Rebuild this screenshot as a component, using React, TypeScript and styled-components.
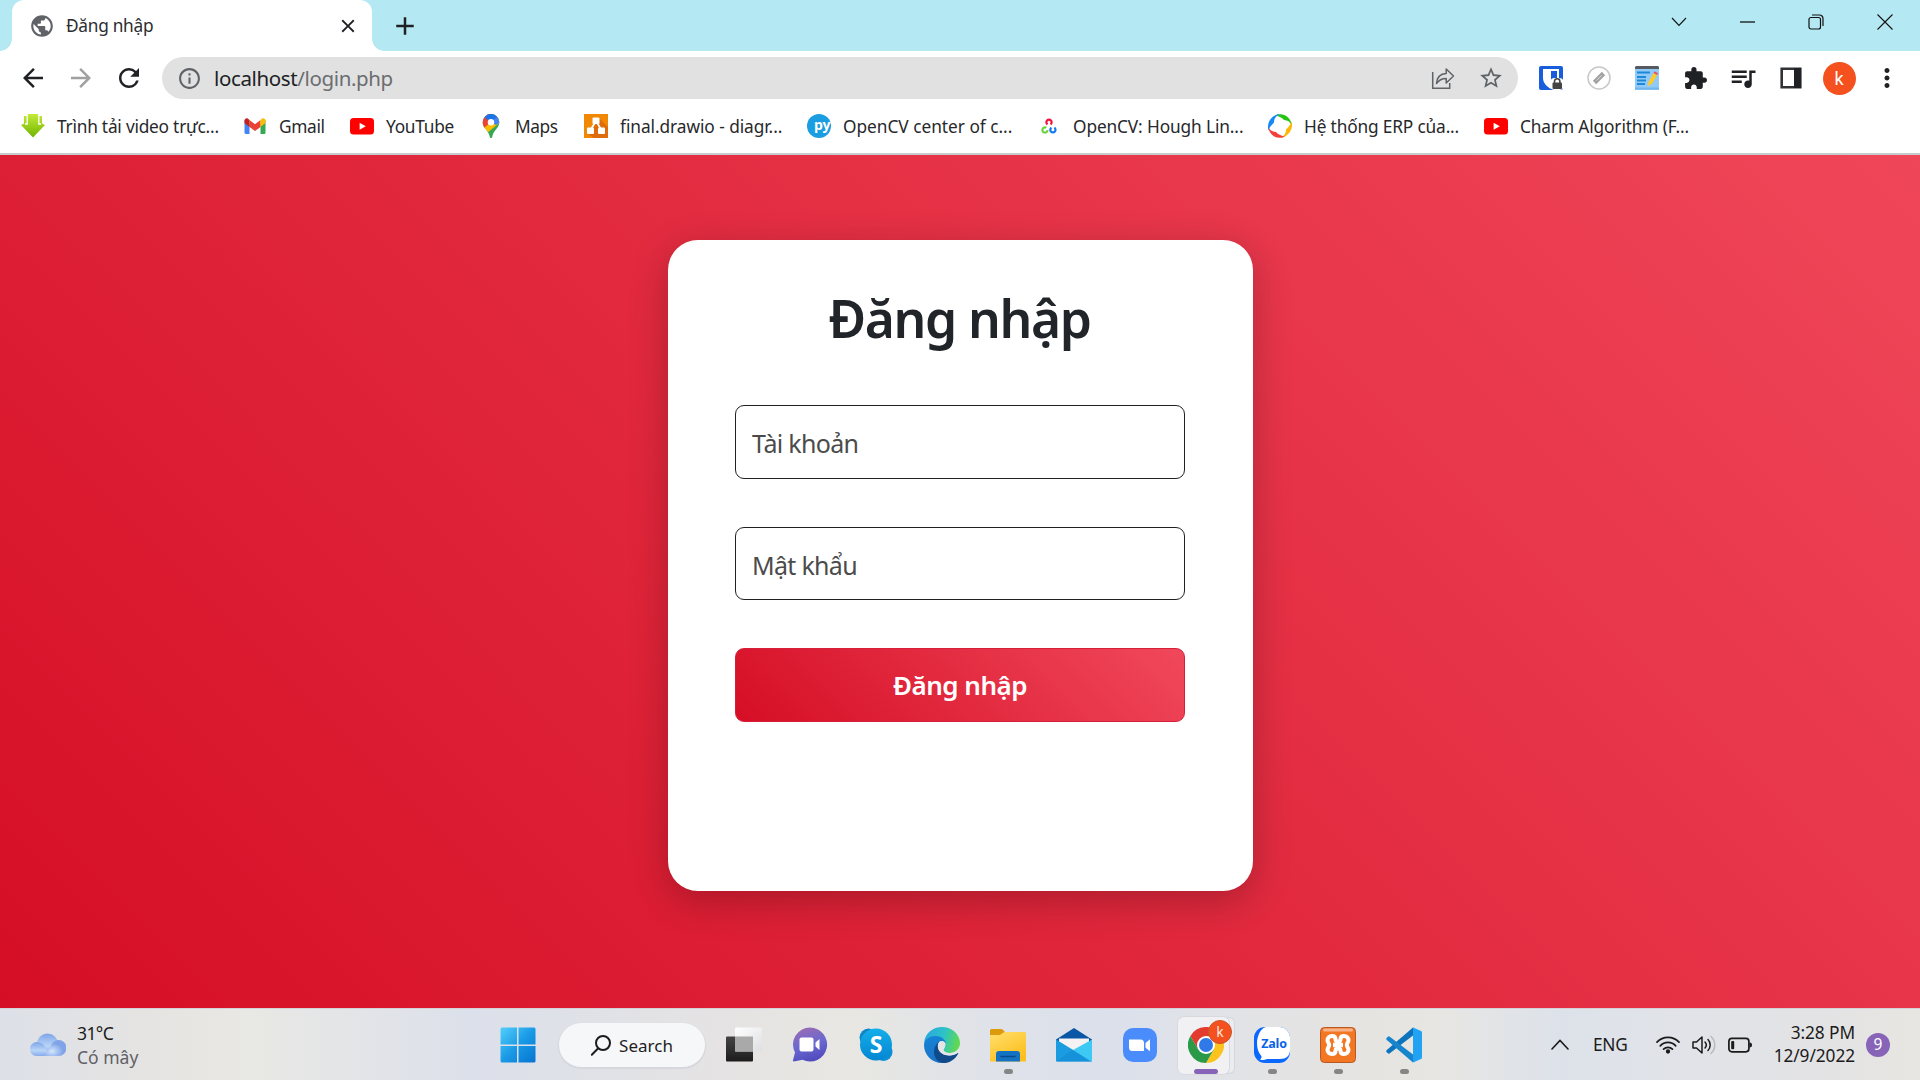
import React from "react";
import styled, { createGlobalStyle } from "styled-components";
import {
  MdAdd,
  MdArrowBack,
  MdArrowForward,
  MdClose,
  MdExtension,
  MdInfoOutline,
  MdMoreVert,
  MdPublic,
  MdQueueMusic,
  MdRefresh,
  MdStarBorder,
} from "react-icons/md";

const GlobalStyle = createGlobalStyle`
  * { box-sizing: border-box; }
  body {
    margin: 0;
    background: #fff;
    font-family: "Noto Sans", "Open Sans", sans-serif;
    overflow: hidden;
  }
  svg { display: block; flex: none; }
`;

const Screen = styled.div`
  width: 1920px;
  height: 1080px;
  display: flex;
  flex-direction: column;
  overflow: hidden;
`;

/* Browser chrome */

const TabStrip = styled.header`
  height: 51px;
  flex: none;
  display: flex;
  background: #b4e8f2;
`;

const TabCorner = styled.div<{ $side: "left" | "right" }>`
  width: 12px;
  height: 51px;
  background: radial-gradient(
      circle 12px at ${(p) => (p.$side === "left" ? "0" : "100%")} 0,
      #b4e8f2 11.5px,
      #fff 12px
    )
    0 39px / 12px 12px no-repeat;
`;

const Tab = styled.div`
  width: 360px;
  height: 51px;
  padding: 0 13px 0 17px;
  border-radius: 12px 12px 0 0;
  background: #fff;
  display: flex;
  align-items: center;
  color: #5f6368;
`;

const TabTitle = styled.span`
  flex: 1;
  margin-left: 11px;
  font-size: 17.3px;
  letter-spacing: -0.28px;
  line-height: 50px;
  color: #2b2d31;
`;

const NewTab = styled.button`
  margin: 11px 0 0 6px;
  padding: 0;
  width: 30px;
  height: 30px;
  border: 0;
  background: none;
  color: #202124;
`;

const WindowControls = styled.div`
  margin: 0 1px 0 auto;
  height: 43px;
  display: flex;
`;

const WindowButton = styled.button`
  width: 68.7px;
  padding: 0;
  border: 0;
  background: none;
  display: grid;
  place-items: center;
`;

const Toolbar = styled.div`
  height: 54px;
  flex: none;
  display: flex;
  align-items: center;
  padding: 0 9px 0 9px;
  color: #202124;
`;

const ToolButton = styled.button<{ $color?: string }>`
  width: 48px;
  height: 42px;
  padding: 0;
  border: 0;
  background: none;
  display: grid;
  place-items: center;
  color: ${(p) => p.$color ?? "#202124"};
`;

const AddressBar = styled.div`
  width: 1356px;
  height: 42px;
  margin: 0 9px;
  padding: 0 3px 0 15px;
  border-radius: 21px;
  background: #e1e1e1;
  display: flex;
  align-items: center;
  color: #5f6368;
`;

const Url = styled.span`
  flex: 1;
  margin-left: 12px;
  font-size: 20.5px;
  letter-spacing: -0.37px;
  line-height: 42px;
  color: #6b6d70;

  b {
    font-weight: 400;
    color: #202124;
  }
`;

const Avatar = styled.span`
  width: 33px;
  height: 33px;
  border-radius: 50%;
  background: #f4511e;
  color: #fff;
  font: 18px/33px Roboto, sans-serif;
  text-align: center;
`;

const BookmarksBar = styled.nav`
  height: 48px;
  flex: none;
  display: flex;
  align-items: center;
  padding: 0 0 6px 21px;
`;

const Bookmark = styled.a<{ $width: number; $spacing: number }>`
  width: ${(p) => p.$width}px;
  flex: none;
  display: flex;
  align-items: center;
  gap: 12px;
  white-space: nowrap;
  color: #27282b;
  font-size: 17.3px;
  letter-spacing: ${(p) => p.$spacing}px;
`;

const ChromeEdge = styled.div`
  height: 2px;
  flex: none;
  background: #c8cbcb;
`;

/* Login page */

const Page = styled.main`
  height: 853px;
  flex: none;
  display: flex;
  justify-content: center;
  align-items: flex-start;
  padding: 85px 0 0 1px;
  background: linear-gradient(45deg, #d50e25, #f04659);
`;

const Card = styled.form`
  width: 585px;
  height: 651px;
  padding: 44px 67px 0;
  border-radius: 30px;
  background: #fff;
  box-shadow: 0 10px 38px rgba(0, 0, 0, 0.24);
  display: flex;
  flex-direction: column;
`;

const Title = styled.h1`
  margin: 0 2px 53px 0;
  height: 68px;
  font-size: 51.5px;
  line-height: 68px;
  font-weight: 600;
  letter-spacing: -1.35px;
  text-align: center;
  white-space: nowrap;
  color: #212529;
`;

const Field = styled.input<{ $height: number }>`
  width: 450px;
  height: ${(p) => p.$height}px;
  margin: 0 0 48px;
  padding: 2px 16px 0;
  border: 1.4px solid #212121;
  border-radius: 9px;
  outline: 0;
  background: #fff;
  font: 25px "Noto Sans", sans-serif;
  letter-spacing: -0.7px;

  &::placeholder {
    color: #4b4b4b;
    opacity: 1;
  }
`;

const Submit = styled.button`
  width: 450px;
  height: 74px;
  padding: 0;
  border: 1px solid #d81f39;
  border-radius: 9px;
  background: linear-gradient(45deg, #d50e25, #f1485b);
  color: #fff;
  font: 600 26px "Noto Sans", sans-serif;
  letter-spacing: -0.5px;
`;

/* Taskbar */

const Taskbar = styled.footer`
  height: 72px;
  flex: none;
  display: flex;
  border-top: 1px solid #d3d0d6;
  background: linear-gradient(
    90deg,
    #dde0e8 0,
    #e6e4e2 150px,
    #e8e8e4 250px,
    #e2e4e8 370px,
    #dce0ea 470px,
    #dfe1e8 570px,
    #e5e3e3 720px,
    #e8e7e2 850px,
    #e1e3e8 950px,
    #dbe0eb 1110px,
    #e2e3e7 1230px,
    #e6e4e1 1370px,
    #e7e6e3 1440px,
    #dde2ea 1560px,
    #e1e3e8 1680px,
    #e3e3e5 1820px,
    #e7e6e1 1920px
  );
`;

const Weather = styled.div`
  width: 485px;
  padding: 0 0 0 30px;
  display: flex;
  align-items: center;
  gap: 11px;
`;

const WeatherText = styled.div`
  display: flex;
  flex-direction: column;
  font-size: 17.5px;
  line-height: 24px;
  letter-spacing: -0.6px;
  color: #1b1b1b;
  padding-top: 1px;

  small {
    font-size: inherit;
    letter-spacing: 0;
    color: #606166;
  }
`;

const AppSlot = styled.div<{ $active?: boolean }>`
  position: relative;
  width: 66px;
  display: grid;
  place-items: center;
  padding-top: 1px;
`;

const ActivePlate = styled.div`
  position: absolute;
  left: 5px;
  top: 8px;
  width: 51px;
  height: 57px;
  border-radius: 6px;
  background: #f1f1f4;
  box-shadow: 0 0 0 1px #d9dae0, 6px 0 0 -1px #ebecef, 6px 0 0 0 #d5d7dd;
`;

const AppArt = styled.div`
  position: relative;
`;

const RunMark = styled.i<{ $active?: boolean }>`
  position: absolute;
  left: ${(p) => (p.$active ? 21 : 28.5)}px;
  bottom: 6px;
  width: ${(p) => (p.$active ? 24 : 9)}px;
  height: 5px;
  border-radius: 3px;
  background: ${(p) => (p.$active ? "#8764b8" : "#858585")};
`;

const ProfileBadge = styled.span`
  position: absolute;
  left: 35px;
  top: 11px;
  width: 24px;
  height: 24px;
  border-radius: 50%;
  background: #f4511e;
  border: 1px solid #c9562f;
  color: #ffe4da;
  font: 14px/22px Roboto, sans-serif;
  text-align: center;
`;

const SearchBox = styled.div`
  width: 146px;
  height: 44px;
  margin: 14px 6px 0 8px;
  padding: 0 0 0 32px;
  border-radius: 22px;
  background: #f6f7f9;
  box-shadow: 0 1px 1px 1px #d5d7dc;
  display: flex;
  align-items: center;
  gap: 8px;
  font-size: 17px;
  letter-spacing: 0.05px;
  color: #1f1f1f;
`;

const Tray = styled.div`
  margin-left: auto;
  padding: 0 30px 0 0;
  display: flex;
  align-items: center;
  color: #1b1b1b;
`;

const Language = styled.span`
  width: 36px;
  margin: 0 27px 1px 24px;
  font-size: 17.3px;
  letter-spacing: -0.3px;
`;

const StatusIcons = styled.div`
  display: flex;
  gap: 12px;
`;

const Clock = styled.time`
  width: 103px;
  margin-right: 1px;
  padding-bottom: 2px;
  display: flex;
  flex-direction: column;
  align-items: flex-end;
  white-space: nowrap;
  font-size: 17.3px;
  line-height: 23px;
  letter-spacing: -0.08px;
`;

const Count = styled.span`
  width: 24px;
  height: 24px;
  margin-left: 10px;
  border-radius: 50%;
  background: #8764b8;
  color: #fff;
  font-size: 15.5px;
  line-height: 23px;
  text-align: center;
`;

/* Bookmark icons */

const DownloadIcon = () => (
  <svg width="24" height="26" viewBox="0 0 24 26">
    <defs>
      <linearGradient id="dl" x2="0" y2="1">
        <stop stopColor="#c4ea3a" />
        <stop offset="1" stopColor="#6fb500" />
      </linearGradient>
    </defs>
    <path d="M0 12l3-1.500V3h3.200V1h11.600v2H21v7.500l3 1.500-12 12.500z" fill="url(#dl)" />
    <path d="M6.200 1v10H4M17.800 1v10H20" stroke="#fff" strokeWidth="1.300" fill="none" />
  </svg>
);

const GmailIcon = () => (
  <svg width="24" height="24" viewBox="0 0 24 24">
    <path d="M1.500 6v12.500A1.500 1.500 0 0 0 3 20h3.500V10z" fill="#4285f4" />
    <path d="M22.500 6v12.500A1.500 1.500 0 0 1 21 20h-3.500V10z" fill="#34a853" />
    <path d="M6.500 6v7L12 17l5.500-4V6L12 10.200z" fill="#ea4335" />
    <path d="M1.500 6.500V9l5 4V6L5 4.700C3.400 3.500 1.500 4.700 1.500 6.500z" fill="#c5221f" />
    <path d="M22.500 6.500V9l-5 4V6L19 4.700c1.600-1.200 3.500 0 3.500 1.800z" fill="#fbbc04" />
  </svg>
);

const YouTubeIcon = () => (
  <svg width="24" height="24" viewBox="0 0 24 24">
    <rect y="4" width="24" height="16.500" rx="3.500" fill="#f00" />
    <path d="M9.600 8.700v7l6.200-3.500z" fill="#fff" />
  </svg>
);

const MapsIcon = () => (
  <svg width="24" height="24" viewBox="0 0 24 24">
    <clipPath id="pin">
      <path d="M12 0a8.300 8.300 0 0 0-8.300 8.300c0 6.200 5.500 7.200 7 14.200.2 1 .6 1.500 1.300 1.500s1.100-.5 1.300-1.500c1.500-7 7-8 7-14.200A8.300 8.300 0 0 0 12 0z" />
    </clipPath>
    <g clipPath="url(#pin)">
      <path d="M0 0h24v24H0z" fill="#34a853" />
      <path d="M3 13.500 17 0h7v6L8 19z" fill="#fbbc04" />
      <path d="M0 0h12v8L5 14H0z" fill="#ea4335" />
      <path d="M5 3 12 8.500 19.500 2.500 13-1H8z" fill="#1a73e8" />
      <path d="M12 8.500 19 2.500 22 8l-5 3z" fill="#4285f4" />
    </g>
    <circle cx="12" cy="8.300" r="3.200" fill="#fff" />
  </svg>
);

const DrawioIcon = () => (
  <svg width="24" height="24" viewBox="0 0 24 24">
    <path d="M0 0h24v24H0z" fill="#f08705" />
    <path d="m15 4 9 9v11H10l-6-4 8-10z" fill="#df6c0c" />
    <path d="m12 7-5.500 9M12 7l5.500 9" stroke="#fff" strokeWidth="1.700" />
    <rect x="8.500" y="3.500" width="7" height="6.500" rx="1" fill="#fff" />
    <rect x="3" y="13.500" width="7" height="6.500" rx="1" fill="#fff" />
    <rect x="14" y="13.500" width="7" height="6.500" rx="1" fill="#fff" />
  </svg>
);

const PyIcon = () => (
  <svg width="24" height="24" viewBox="0 0 24 24">
    <circle cx="12" cy="12" r="12" fill="#1b9de2" />
    <text x="7" y="16" fontFamily="Open Sans, sans-serif" fontWeight="700" fontSize="14" letterSpacing="-.3" fill="#fff">py</text>
  </svg>
);

const OpenCvIcon = () => (
  <svg width="24" height="24" viewBox="0 0 24 24" fill="none" strokeWidth="2.200">
    <path d="M10.500 10.400a2.600 2.600 0 1 1 3 0" stroke="#f0143c" />
    <path d="M9.300 13.700a2.600 2.600 0 1 0 1.300 2.500" stroke="#6ad43a" />
    <path d="M14.400 13.700a2.600 2.600 0 1 0 3 0" stroke="#1478f0" />
  </svg>
);

const ErpIcon = () => (
  <svg width="24" height="24" viewBox="0 0 24 24">
    <path d="M7 1.500C14-2 23 2 24 12c-1.500-4-4-6-8-6C14 3.500 10 2 7 1.500z" fill="#28c414" />
    <path d="M23.500 7.500c2.500 8-4 16.500-12 16.500 4-1.500 6.500-4 6.500-8.500C20 13.500 22.500 11 23.500 7.500z" fill="#fbb80a" />
    <path d="M17 22.500C10 26 1 22 0 12c1.500 4 4 6 8 6 2 2.500 6 4 9 4.500z" fill="#f4403c" />
    <path d="M.5 16.500C-2 8.500 4.500 0 12.500 0 8.500 1.500 6 4 6 8.500 4 10.500 1.500 13 .5 16.500z" fill="#1689f5" />
    <circle cx="12" cy="12" r="6.300" fill="#fff" />
  </svg>
);

/* Toolbar icons */

const ShareIcon = () => (
  <svg width="24" height="24" viewBox="0 0 24 24" fill="none" stroke="#5f6368" strokeWidth="1.500">
    <path d="M1.700 6v16.300h17V17" />
    <path d="M5.500 17.500C6 11 9.500 7.800 15.200 7.500V3l7.300 7-7.300 7v-4.600c-4-.1-7 1.300-9.700 5.100z" strokeLinejoin="round" />
  </svg>
);

const VaultIcon = () => (
  <svg width="24" height="24" viewBox="0 0 24 24">
    <rect width="24" height="24" rx="2" fill="#175ddc" />
    <path d="M4 3h16v9c0 6-5 9-8 11-3-2-8-5-8-11z" fill="#fff" />
    <path d="M12 5h6v7c0 3-2.500 5.500-6 8z" fill="#175ddc" />
    <rect x="11.500" y="12" width="13" height="12" rx="4" fill="#fff" />
    <path d="M15.500 17v-1.500a2.700 2.700 0 0 1 5.400 0V17" fill="none" stroke="#444" strokeWidth="1.600" />
    <rect x="13.500" y="16.500" width="9.500" height="6.500" rx="1" fill="#444" />
  </svg>
);

const PenIcon = () => (
  <svg width="24" height="24" viewBox="0 0 24 24">
    <circle cx="12" cy="12" r="11" fill="#fff" stroke="#c8c8c8" strokeWidth="1.500" />
    <path d="m7.500 16.500 9-9" stroke="#a2a2a2" strokeWidth="4.600" />
    <path d="m9.500 14.500 5-5" stroke="#d8d8d8" strokeWidth="1" />
  </svg>
);

const NotesIcon = () => (
  <svg width="24" height="24" viewBox="0 0 24 24">
    <path d="M0 1.500A1.500 1.500 0 0 1 1.500 0h21A1.500 1.500 0 0 1 24 1.500V24H0z" fill="#90caf9" />
    <path d="M0 1.500A1.500 1.500 0 0 1 1.500 0h21A1.500 1.500 0 0 1 24 1.500V3H0z" fill="#555a60" />
    <path d="M2 6.500h13M2 11h9M2 14.500h9M2 18h8" stroke="#1e88d8" strokeWidth="1.800" />
    <path d="M0 22.500h24" stroke="#72b6ec" strokeWidth="2" />
    <path d="m12.500 20.500 1.200-4.800L18.500 7l3.700 2-5 8.500z" fill="#ffca28" />
    <path d="m18.500 7 1-1.800 3.500 2-.9 1.800z" fill="#e8506a" />
  </svg>
);

const PanelIcon = () => (
  <svg width="22" height="22" viewBox="0 0 22 22">
    <path d="M1.700 1.700h18.600v18.600H1.700z" fill="#fff" stroke="#303236" strokeWidth="2.600" />
    <path d="M14 1h7v20h-7z" fill="#202124" />
  </svg>
);

/* Taskbar icons */

const CloudIcon = () => (
  <svg width="36" height="24" viewBox="0 0 36 24">
    <defs>
      <linearGradient id="cl" x2="0" y2="1">
        <stop stopColor="#7ea5e6" />
        <stop offset=".6" stopColor="#b9d5f8" />
        <stop offset="1" stopColor="#86abe9" />
      </linearGradient>
      <radialGradient id="cr" cx=".35" cy=".7">
        <stop stopColor="#d5e7fc" />
        <stop offset="1" stopColor="#80a4e8" />
      </radialGradient>
    </defs>
    <circle cx="17.500" cy="11" r="10.500" fill="url(#cl)" />
    <path d="M7 23a7 7 0 1 1 3-13.200c3 .8 4.500 2.700 5 4.200l5 9z" fill="url(#cl)" />
    <path d="M14 23c1-3 4-5 6-8 1.300-5 5-8 8.500-8a8 8 0 0 1 0 16z" fill="url(#cr)" />
  </svg>
);

const StartIcon = () => (
  <svg width="36" height="36" viewBox="0 0 36 36">
    <defs>
      <linearGradient id="win" gradientUnits="userSpaceOnUse" x1="0" y1="0" x2="36" y2="36">
        <stop stopColor="#55d0fb" />
        <stop offset=".5" stopColor="#1a9ae6" />
        <stop offset="1" stopColor="#0673d0" />
      </linearGradient>
    </defs>
    <path d="M2 .5h15v17H.5V2A1.500 1.500 0 0 1 2 .5zM18.500.5H34A1.500 1.500 0 0 1 35.500 2v15.500h-17zM.5 19H17v16.500H2A1.500 1.500 0 0 1 .5 34zM18.500 19h17v15a1.500 1.500 0 0 1-1.500 1.500H18.500z" fill="url(#win)" />
  </svg>
);

const MagnifierIcon = () => (
  <svg width="20" height="21" viewBox="0 0 20 21" fill="none" stroke="#1b1b1b" strokeWidth="2">
    <circle cx="12" cy="8" r="7" />
    <path d="M7 13.500.8 19.700" strokeLinecap="round" />
  </svg>
);

const TaskViewIcon = () => (
  <svg width="36" height="36" viewBox="0 0 36 36">
    <defs>
      <linearGradient id="tv" x2="0" y2="1"><stop stopColor="#444" /><stop offset="1" stopColor="#1c1c1c" /></linearGradient>
      <linearGradient id="tw" x2="1" y2="1"><stop stopColor="#fff" /><stop offset="1" stopColor="#dedfe2" /></linearGradient>
    </defs>
    <rect y="9.500" width="27" height="25" rx="1" fill="url(#tv)" />
    <rect x="9" y=".5" width="27" height="24" rx="1" fill="url(#tw)" />
    <path d="M9 9.500h18v15H9z" fill="#a9a9a9" />
  </svg>
);

const ChatIcon = () => (
  <svg width="36" height="36" viewBox="0 0 36 36">
    <defs>
      <linearGradient id="ch" x1=".3" x2=".6" y2="1"><stop stopColor="#9a6bb4" /><stop offset=".5" stopColor="#6a69d0" /><stop offset="1" stopColor="#5049bd" /></linearGradient>
    </defs>
    <path d="M18 .5a17 17 0 1 1-7.500 32.200L2 34.500c-1 0-1.300-.7-1-1.500l2-7.500A17 17 0 0 1 18 .5z" fill="url(#ch)" />
    <rect x="7.500" y="10.500" width="14" height="14" rx="2" fill="#fff" />
    <path d="m23.500 15.500 4-3.500v11l-4-3.500z" fill="#fff" />
  </svg>
);

const SkypeIcon = () => (
  <svg width="36" height="36" viewBox="0 0 36 36">
    <defs>
      <linearGradient id="sk" x2="0" y2="1"><stop stopColor="#14aeea" /><stop offset="1" stopColor="#0486d2" /></linearGradient>
    </defs>
    <circle cx="10.500" cy="10.500" r="9" fill="#0c88c9" />
    <circle cx="25.500" cy="25" r="9" fill="#0a8fd6" />
    <circle cx="18" cy="17.500" r="16" fill="url(#sk)" />
    <text x="18" y="25.500" fontFamily="Open Sans, sans-serif" fontWeight="700" fontSize="23" textAnchor="middle" fill="#fff">S</text>
  </svg>
);

const EdgeIcon = () => (
  <svg width="36" height="36" viewBox="0 0 36 36">
    <defs>
      <linearGradient id="e1" x1="0" x2="1" y1=".2" y2=".4"><stop stopColor="#2aa6e0" /><stop offset=".55" stopColor="#2cc3c8" /><stop offset="1" stopColor="#62d94f" /></linearGradient>
      <linearGradient id="e2" x2="0" y2="1"><stop stopColor="#1583d4" /><stop offset="1" stopColor="#1a73c9" /></linearGradient>
    </defs>
    <path d="M0 16C1 6 9 0 18 0c10 0 18 7.500 18 16 0 6-4.500 10-10 10-4 0-6.500-1.500-6.500-3 0-1 1.500-1.500 1.500-4.500C21 14 17 11 12 11 6 11 2 13 0 16z" fill="url(#e1)" />
    <path d="M0 18c0-5 5-9 11.500-9C18 9 22 13.500 22 17c-1-2-3-3-4.500-3-3 0-5 4-3.500 9 1.500 5 6 9 12 9-2 2-5 4-8 4C8 36 0 28 0 18z" fill="url(#e2)" />
    <path d="M15 14.500c-3 4-1 11.500 6.500 13.500 5 1.300 9-.2 12-2 .5-.3 1 .2.700.7C31 32.500 25.500 36 19.500 36 13 35.500 9.500 29.500 10 24c.3-4 2.500-7.500 5-9.500z" fill="#114a8b" />
    <path d="M21.500 16.500c.3 3.500-2 4.500-2 6.500 0 1.500 2.500 3 6.500 3 3 0 6-1.200 8-3.500l.5 3c-3.500 2.300-8 3.800-13 2.500-5-1.300-7.500-5-7.500-8.500 0-3 1.500-5.500 4-5.500 1.500 0 3 1 3.500 2.500z" fill="#e4e5e8" />
  </svg>
);

const FolderIcon = () => (
  <svg width="36" height="36" viewBox="0 0 36 36">
    <defs>
      <linearGradient id="fo" x2=".6" y2="1"><stop stopColor="#ffdf6e" /><stop offset="1" stopColor="#fdbf1e" /></linearGradient>
    </defs>
    <path d="M0 3.500A1.500 1.500 0 0 1 1.500 2H11c1.500 0 2 .8 3 2l1.500 1.500L10 9H0z" fill="#dc9a0c" />
    <path d="M0 8h9c3 0 3.500-3 6-3h19.500A1.500 1.500 0 0 1 36 6.500V34.500H0z" fill="url(#fo)" />
    <path d="M6 34.500V27a3 3 0 0 1 3-3h18a3 3 0 0 1 3 3v7.500z" fill="#1372c2" />
    <path d="M11 29.500h14" stroke="#0a4a8c" strokeWidth="1.500" strokeLinecap="round" />
  </svg>
);

const MailIcon = () => (
  <svg width="36" height="36" viewBox="0 0 36 36">
    <path d="M0 12.500 18 1l18 11.500V15H0z" fill="#0a57a6" />
    <path d="M3 11.500h30V20L18 27 3 20z" fill="#f4f2f2" />
    <path d="m0 12.500 36 22H1a1 1 0 0 1-1-1z" fill="#1b9be0" />
    <path d="M36 12.500v21a1 1 0 0 1-1 1H34L17 23z" fill="#3ec9f5" />
    <path d="m0 34 17-11 18.500 11.500H1z" fill="#168fd8" opacity=".75" />
  </svg>
);

const ZoomIcon = () => (
  <svg width="36" height="36" viewBox="0 0 36 36">
    <rect x="1" y="1" width="34" height="34" rx="10" fill="#4a8cfb" />
    <path d="M7 12.500h11.500a3.500 3.500 0 0 1 3.500 3.500v8H10.500A3.500 3.500 0 0 1 7 20.500zM23.500 16l4.500-3.700v12l-4.500-3.600z" fill="#fff" />
  </svg>
);

const ChromeIcon = () => (
  <svg width="36" height="36" viewBox="0 0 36 36">
    <path d="M2.400 9A18 18 0 0 1 33.600 9H18L10.200 22.500z" fill="#e33b2e" />
    <path d="M33.600 9A18 18 0 0 1 18 36l7.800-13.500L18 9z" fill="#fcc31e" />
    <path d="M18 36A18 18 0 0 1 2.400 9l7.800 13.500h15.600z" fill="#2a9a48" />
    <circle cx="18" cy="18" r="9" fill="#fff" />
    <circle cx="18" cy="18" r="7" fill="#3079e8" />
  </svg>
);

const ZaloIcon = () => (
  <svg width="36" height="36" viewBox="0 0 36 36">
    <rect width="36" height="36" rx="11" fill="#0a68fe" />
    <path d="M13 0h12a11 11 0 0 1 11 11v12c0 6-4 9-10 9H13c-3 1.500-5.500 1.300-7 .5 1.500-1 2-2.500 1-4C1 22 2 7 9 1.500 10 .5 11.500 0 13 0z" fill="#fff" />
    <text x="20" y="21" fontFamily="Open Sans, sans-serif" fontWeight="700" fontSize="12.500" letterSpacing="-.2" textAnchor="middle" fill="#0a62e8">Zalo</text>
  </svg>
);

const XamppIcon = () => (
  <svg width="36" height="36" viewBox="0 0 36 36">
    <rect x=".5" y=".5" width="35" height="35" rx="4" fill="#f37623" stroke="#b65a22" />
    <rect x="3" y="1.500" width="30" height="3" rx="1.500" fill="#f6b28a" />
    <path
      d="M18 14.500c-1.500 0-2.500-.8-2.500-2.200 0-2-1.300-3.300-3.500-3.300-2.700 0-4.500 1.700-4.500 4.200 0 2 1.700 3 1.700 4.800s-1.700 2.800-1.700 4.800c0 2.500 1.800 4.200 4.500 4.200 2.200 0 3.500-1.300 3.500-3.300 0-1.400 1-2.200 2.500-2.200s2.500.8 2.500 2.200c0 2 1.300 3.300 3.500 3.300 2.700 0 4.500-1.700 4.500-4.200 0-2-1.700-3-1.700-4.800s1.700-2.800 1.700-4.800C28.500 10.700 26.700 9 24 9c-2.200 0-3.500 1.300-3.500 3.300 0 1.400-1 2.200-2.500 2.200z"
      fill="none"
      stroke="#fff"
      strokeWidth="4"
      strokeLinejoin="round"
    />
    <path d="M13 18h10" stroke="#fff" strokeWidth="4.500" />
  </svg>
);

const CodeIcon = () => (
  <svg width="36" height="36" viewBox="0 0 36 36">
    <path d="M3.500 26.500 27 8.500V.5L.8 23c-.8.800-.8 1.500 0 2.200l1.500 1.300c.4.300.8.300 1.200 0z" fill="#0b74bd" />
    <path d="M.8 10.800 2.300 9.500c.4-.3.800-.3 1.200 0L27 27.500V35.500L.8 13c-.8-.7-.8-1.500 0-2.200z" fill="#1685cc" />
    <path d="m26 0 9 4c.6.300 1 .8 1 1.500v25c0 .7-.4 1.200-1 1.500l-9 4c1 0 1-1 1-2V2c0-1 0-2-1-2z" fill="#22a2f2" />
  </svg>
);

const WifiIcon = () => (
  <svg width="24" height="24" viewBox="0 0 24 24" fill="none" stroke="#1b1b1b" strokeWidth="1.700" strokeLinecap="round">
    <path d="M1 9.200a15 15 0 0 1 22 0M4.300 12.800a10.500 10.500 0 0 1 15.400 0M7.600 16.200a6 6 0 0 1 8.800 0" />
    <circle cx="12" cy="18.500" r="1.300" fill="#1b1b1b" />
  </svg>
);

const SpeakerIcon = () => (
  <svg width="24" height="24" viewBox="0 0 24 24" fill="none" stroke="#1b1b1b" strokeWidth="1.500" strokeLinecap="round" strokeLinejoin="round">
    <path d="M1 9h3.500L10 4v16l-5.500-5H1z" />
    <path d="M13 9a4.500 4.500 0 0 1 0 6M16 6.500a8 8 0 0 1 0 11" />
    <path d="M19 3.500c5 4.500 5 12.500 0 17" stroke="#b8babd" />
  </svg>
);

const BatteryIcon = () => (
  <svg width="24" height="24" viewBox="0 0 24 24">
    <rect x=".9" y="5.400" width="20" height="13.400" rx="3" fill="none" stroke="#1b1b1b" strokeWidth="1.700" />
    <rect x="3.200" y="8" width="3" height="8.200" rx="1" fill="#1b1b1b" />
    <path d="M21.500 9.500c1.500 0 2.500.8 2.500 2.500s-1 2.500-2.500 2.500z" fill="#1b1b1b" />
  </svg>
);

const bookmarks = [
  { label: "Trình tải video trực...", icon: <DownloadIcon />, width: 222, spacing: -0.22 },
  { label: "Gmail", icon: <GmailIcon />, width: 107, spacing: -0.35 },
  { label: "YouTube", icon: <YouTubeIcon />, width: 129, spacing: -0.25 },
  { label: "Maps", icon: <MapsIcon />, width: 105, spacing: -0.45 },
  { label: "final.drawio - diagr...", icon: <DrawioIcon />, width: 223, spacing: -0.06 },
  { label: "OpenCV center of c...", icon: <PyIcon />, width: 230, spacing: -0.02 },
  { label: "OpenCV: Hough Lin...", icon: <OpenCvIcon />, width: 231, spacing: -0.12 },
  { label: "Hệ thống ERP của...", icon: <ErpIcon />, width: 216, spacing: -0.16 },
  { label: "Charm Algorithm (F...", icon: <YouTubeIcon />, width: 216, spacing: -0.13 },
];

const apps = [
  { name: "taskview", art: <TaskViewIcon /> },
  { name: "chat", art: <ChatIcon /> },
  { name: "skype", art: <SkypeIcon /> },
  { name: "edge", art: <EdgeIcon /> },
  { name: "files", art: <FolderIcon />, running: true },
  { name: "mail", art: <MailIcon /> },
  { name: "zoom", art: <ZoomIcon /> },
  { name: "chrome", art: <ChromeIcon />, running: true, active: true },
  { name: "zalo", art: <ZaloIcon />, running: true },
  { name: "xampp", art: <XamppIcon />, running: true },
  { name: "code", art: <CodeIcon />, running: true },
];

export default function App() {
  return (
    <Screen>
      <GlobalStyle />
      <TabStrip>
        <TabCorner $side="left" />
        <Tab>
          <MdPublic size={26} />
          <TabTitle>Đăng nhập</TabTitle>
          <MdClose size={22} color="#202124" />
        </Tab>
        <TabCorner $side="right" />
        <NewTab>
          <MdAdd size={30} />
        </NewTab>
        <WindowControls>
          <WindowButton>
            <svg width="16" height="10" fill="none" stroke="#111" strokeWidth="1.100"><path d="m1 1 7 7.500L15 1" /></svg>
          </WindowButton>
          <WindowButton>
            <svg width="15" height="2"><path d="M0 1h15" stroke="#111" strokeWidth="1.300" /></svg>
          </WindowButton>
          <WindowButton>
            <svg width="16" height="16" fill="none" stroke="#111" strokeWidth="1.200">
              <rect x="1" y="3.500" width="11.500" height="11.500" rx="2" />
              <path d="M4 1h7.500A3.500 3.500 0 0 1 15 4.500V12" />
            </svg>
          </WindowButton>
          <WindowButton>
            <svg width="16" height="16" stroke="#111" strokeWidth="1.100"><path d="m.5.500 15 15m0-15-15 15" /></svg>
          </WindowButton>
        </WindowControls>
      </TabStrip>

      <Toolbar>
        <ToolButton><MdArrowBack size={30} /></ToolButton>
        <ToolButton $color="#a0a0a0"><MdArrowForward size={30} /></ToolButton>
        <ToolButton><MdRefresh size={30} /></ToolButton>
        <AddressBar>
          <MdInfoOutline size={25} />
          <Url><b>localhost</b>/login.php</Url>
          <ToolButton><ShareIcon /></ToolButton>
          <ToolButton $color="#5f6368"><MdStarBorder size={26} /></ToolButton>
        </AddressBar>
        <ToolButton><VaultIcon /></ToolButton>
        <ToolButton><PenIcon /></ToolButton>
        <ToolButton><NotesIcon /></ToolButton>
        <ToolButton><MdExtension size={25} /></ToolButton>
        <ToolButton><MdQueueMusic size={30} /></ToolButton>
        <ToolButton><PanelIcon /></ToolButton>
        <ToolButton><Avatar>k</Avatar></ToolButton>
        <ToolButton><MdMoreVert size={30} /></ToolButton>
      </Toolbar>

      <BookmarksBar>
        {bookmarks.map((b) => (
          <Bookmark key={b.label} $width={b.width} $spacing={b.spacing}>
            {b.icon}
            {b.label}
          </Bookmark>
        ))}
      </BookmarksBar>
      <ChromeEdge />

      <Page>
        <Card onSubmit={(e) => e.preventDefault()}>
          <Title>Đăng nhập</Title>
          <Field $height={74} placeholder="Tài khoản" />
          <Field $height={73} type="password" placeholder="Mật khẩu" />
          <Submit>Đăng nhập</Submit>
        </Card>
      </Page>

      <Taskbar>
        <Weather>
          <CloudIcon />
          <WeatherText>
            31°C
            <small>Có mây</small>
          </WeatherText>
        </Weather>
        <AppSlot><StartIcon /></AppSlot>
        <SearchBox>
          <MagnifierIcon />
          Search
        </SearchBox>
        {apps.map((a) => (
          <AppSlot key={a.name}>
            {a.active && <ActivePlate />}
            <AppArt>{a.art}</AppArt>
            {a.active && <ProfileBadge>k</ProfileBadge>}
            {a.running && <RunMark $active={a.active} />}
          </AppSlot>
        ))}
        <Tray>
          <svg width="18" height="11" fill="none" stroke="#1b1b1b" strokeWidth="1.600" strokeLinecap="round"><path d="m1 10 8-8.500L17 10" /></svg>
          <Language>ENG</Language>
          <StatusIcons>
            <WifiIcon />
            <SpeakerIcon />
            <BatteryIcon />
          </StatusIcons>
          <Clock>
            <span>3:28 PM</span>
            <span>12/9/2022</span>
          </Clock>
          <Count>9</Count>
        </Tray>
      </Taskbar>
    </Screen>
  );
}
